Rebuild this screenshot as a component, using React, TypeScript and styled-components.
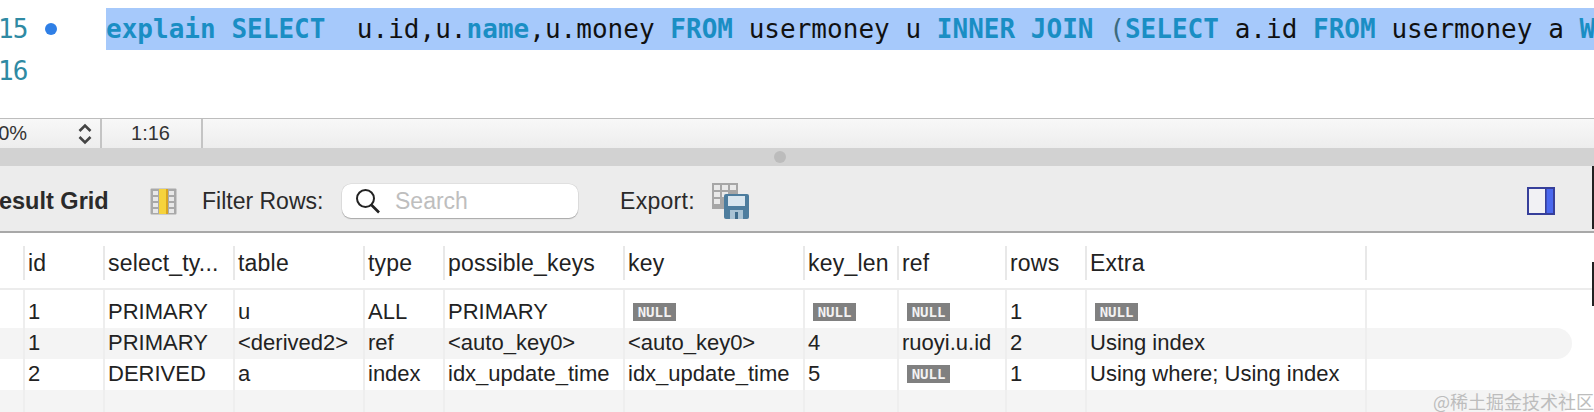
import React from "react";
import styled, { createGlobalStyle } from "styled-components";

const GlobalStyle = createGlobalStyle`
  html, body {
    margin: 0;
    padding: 0;
    background: #fff;
  }
`;

const columns = [23, 80, 130, 130, 80, 180, 180, 94, 108, 80, 280, 207];
const headers = ["", "id", "select_ty...", "table", "type", "possible_keys", "key", "key_len", "ref", "rows", "Extra", ""];
const rows: (string | null)[][] = [
  ["", "1", "PRIMARY", "u", "ALL", "PRIMARY", null, null, null, "1", null, ""],
  ["", "1", "PRIMARY", "<derived2>", "ref", "<auto_key0>", "<auto_key0>", "4", "ruoyi.u.id", "2", "Using index", ""],
  ["", "2", "DERIVED", "a", "index", "idx_update_time", "idx_update_time", "5", null, "1", "Using where; Using index", ""],
  ["", "", "", "", "", "", "", "", "", "", "", ""],
];
const rowHeights = [38, 31, 31, 22];
const rowShifts = [6, -2, -2, 0];

const Kw = ({ children }: { children: React.ReactNode }) => <Keyword>{children}</Keyword>;

const App = () => {
  return (
    <Page>
      <GlobalStyle />
      <Editor>
        <CodeLine>
          <LineNumber>15</LineNumber>
          <Gutter>
            <Dot />
          </Gutter>
          <Selected>
            <Kw>explain</Kw> <Kw>SELECT</Kw>{"  "}u.id,u.<Name>name</Name>,u.money <Kw>FROM</Kw> usermoney u{" "}
            <Kw>INNER</Kw> <Kw>JOIN</Kw> <Paren>(</Paren>
            <Kw>SELECT</Kw> a.id <Kw>FROM</Kw> usermoney a <Kw>WHERE</Kw>
          </Selected>
        </CodeLine>
        <CodeLine>
          <LineNumber>16</LineNumber>
        </CodeLine>
      </Editor>

      <StatusBar>
        <ZoomCell>
          <span>100%</span>
          <svg width="16" height="24" viewBox="0 0 16 24" fill="none" stroke="#444" strokeWidth="2.6">
            <path d="M2.5 9 L8 3.5 L13.5 9" />
            <path d="M2.5 15 L8 20.5 L13.5 15" />
          </svg>
        </ZoomCell>
        <PositionCell>1:16</PositionCell>
      </StatusBar>

      <Splitter>
        <Handle />
      </Splitter>

      <Toolbar>
        <GridTitle>Result Grid</GridTitle>
        <FormEditorIcon />
        <ToolLabel>Filter Rows:</ToolLabel>
        <SearchBox>
          <svg width="26" height="26" viewBox="0 0 26 26" fill="none" stroke="#222" strokeWidth="2">
            <circle cx="10.5" cy="10.5" r="8.5" />
            <path d="M16.5 17 L24 24.5" strokeWidth="2.6" />
          </svg>
          <SearchHint>Search</SearchHint>
        </SearchBox>
        <ExportLabel>Export:</ExportLabel>
        <ExportIcon />
        <PanelToggle />
      </Toolbar>

      <Table>
        <HeaderRow>
          {headers.map((h, i) => (
            <HeaderCell key={i} style={{ width: columns[i] }} $first={i === 0}>
              {h}
            </HeaderCell>
          ))}
        </HeaderRow>
        {rows.map((row, r) => (
          <DataRow key={r} $striped={r % 2 === 1} $height={rowHeights[r]}>
            {row.map((value, i) => (
              <DataCell key={i} style={{ width: columns[i] }} $first={i === 0} $shift={rowShifts[r]}>
                {value === null ? <NullBadge>NULL</NullBadge> : value}
              </DataCell>
            ))}
          </DataRow>
        ))}
      </Table>

      <EdgeTop />
      <EdgeBottom />
      <Watermark>@稀土掘金技术社区</Watermark>
    </Page>
  );
};

const FormEditorIcon = () => (
  <IconSlot $left={40}>
    <svg width="27" height="27" viewBox="0 0 27 27">
      <rect x="0.5" y="0.5" width="26" height="26" rx="1" fill="#a9a9a9" />
      <rect x="3" y="3" width="5" height="4" fill="#e8e8e8" />
      <rect x="3" y="9" width="5" height="4" fill="#e8e8e8" />
      <rect x="3" y="15" width="5" height="4" fill="#e8e8e8" />
      <rect x="3" y="21" width="5" height="4" fill="#e8e8e8" />
      <rect x="19" y="3" width="5" height="4" fill="#e8e8e8" />
      <rect x="19" y="9" width="5" height="4" fill="#e8e8e8" />
      <rect x="19" y="15" width="5" height="4" fill="#e8e8e8" />
      <rect x="19" y="21" width="5" height="4" fill="#e8e8e8" />
      <rect x="9" y="1" width="9" height="25" fill="#f6d33c" />
      <rect x="16" y="1" width="2" height="25" fill="#d9a520" />
    </svg>
  </IconSlot>
);

const ExportIcon = () => (
  <IconSlot $left={17}>
    <svg width="37" height="36" viewBox="0 0 37 36">
      <rect x="0" y="0" width="26" height="26" fill="#a6a6a6" />
      <g fill="#e9e9e9">
        <rect x="2" y="2" width="6" height="5" />
        <rect x="10" y="2" width="6" height="5" />
        <rect x="18" y="2" width="6" height="5" />
        <rect x="2" y="9" width="6" height="5" />
        <rect x="10" y="9" width="6" height="5" />
        <rect x="2" y="16" width="6" height="5" />
      </g>
      <rect x="12" y="11" width="25" height="25" rx="2" fill="#4d7d9e" />
      <rect x="16" y="13" width="17" height="10" fill="#d9e6ef" />
      <rect x="18" y="27" width="13" height="9" fill="#a9c3d4" />
      <rect x="23" y="29" width="3" height="7" fill="#3f6c8b" />
    </svg>
  </IconSlot>
);

const PanelToggle = () => (
  <PanelSlot>
    <svg width="28" height="28" viewBox="0 0 28 28">
      <rect x="1" y="1" width="26" height="26" fill="#f1f1f4" stroke="#363f9a" strokeWidth="2" />
      <rect x="18" y="2" width="8" height="24" fill="#4a68ee" />
      <rect x="18" y="1" width="1.6" height="26" fill="#363f9a" />
    </svg>
  </PanelSlot>
);

const Page = styled.div`
  position: relative;
  width: 1594px;
  height: 412px;
  overflow: hidden;
  background: #fff;
  font-family: "Liberation Sans", Arial, sans-serif;
  color: #222;
`;

const Editor = styled.div`
  height: 118px;
  box-sizing: border-box;
  padding-top: 8px;
  background: #fff;
`;

const CodeLine = styled.div`
  display: flex;
  align-items: center;
  height: 42px;
  font-family: "DejaVu Sans Mono", monospace;
  font-size: 26px;
  letter-spacing: 0.02px;
  white-space: pre;
`;

const LineNumber = styled.div`
  flex: none;
  width: 29px;
  margin-left: -2px;
  color: #2f8aa3;
  letter-spacing: -1px;
`;

const Gutter = styled.div`
  flex: none;
  width: 79px;
  display: flex;
  align-items: center;
  padding-left: 18px;
  box-sizing: border-box;
`;

const Dot = styled.div`
  width: 12px;
  height: 12px;
  border-radius: 50%;
  background: #2f7fe6;
`;

const Selected = styled.div`
  flex: 1;
  height: 42px;
  line-height: 43px;
  background: #a6c9fb;
  color: #111;
  overflow: hidden;
`;

const Keyword = styled.span`
  color: #1a8ec4;
  font-weight: 700;
`;

const Name = styled.span`
  color: #1a8ec4;
  font-weight: 700;
`;

const Paren = styled.span`
  color: #3c6b7e;
`;

const StatusBar = styled.div`
  display: flex;
  height: 30px;
  box-sizing: border-box;
  border-top: 1px solid #bdbdbd;
  background: linear-gradient(#f8f8f8, #ededed);
  font-size: 20px;
  color: #333;
`;

const ZoomCell = styled.div`
  flex: none;
  display: flex;
  align-items: center;
  justify-content: space-between;
  box-sizing: border-box;
  margin-left: -24px;
  width: 126px;
  padding-right: 7px;
  border-right: 2px solid #c4c4c4;
`;

const PositionCell = styled.div`
  width: 101px;
  flex: none;
  display: flex;
  align-items: center;
  justify-content: center;
  box-sizing: border-box;
  padding-right: 2px;
  border-right: 2px solid #c4c4c4;
`;

const Splitter = styled.div`
  height: 18px;
  display: flex;
  align-items: center;
  justify-content: center;
  padding-right: 34px;
  background: #d2d2d2;
`;

const Handle = styled.div`
  width: 12px;
  height: 12px;
  border-radius: 50%;
  background: #bcbcbc;
`;

const Toolbar = styled.div`
  display: flex;
  align-items: center;
  height: 67px;
  box-sizing: border-box;
  padding-top: 5px;
  border-bottom: 2px solid #a8a8a8;
  background: #ececec;
  font-size: 23px;
  color: #2a2a2a;
`;

const GridTitle = styled.div`
  flex: none;
  width: 128px;
  margin-left: -18px;
  font-weight: 700;
  font-size: 23.5px;
  white-space: nowrap;
`;

const IconSlot = styled.div<{ $left: number }>`
  flex: none;
  display: flex;
  margin-left: ${(p) => p.$left}px;
`;

const ToolLabel = styled.div`
  flex: none;
  margin-left: 25px;
  width: 120px;
  white-space: nowrap;
`;

const SearchBox = styled.div`
  flex: none;
  display: flex;
  align-items: center;
  gap: 14px;
  width: 236px;
  height: 34px;
  margin-left: 20px;
  padding-left: 13px;
  box-sizing: border-box;
  background: #fff;
  border-radius: 9px;
  box-shadow: 0 1px 1px #a9a9a9, 0 0 0 0.5px #d4d4d4;
`;

const SearchHint = styled.span`
  color: #bebebe;
  font-size: 23px;
`;

const ExportLabel = styled.div`
  flex: none;
  width: 75px;
  margin-left: 42px;
  letter-spacing: 0.3px;
  white-space: nowrap;
`;

const PanelSlot = styled.div`
  flex: none;
  display: flex;
  margin-left: auto;
  margin-right: 39px;
`;

const Table = styled.div`
  background: #fff;
  font-size: 22px;
  color: #222;
`;

const HeaderRow = styled.div`
  display: flex;
  align-items: center;
  height: 55px;
  border-bottom: 2px solid #ececec;
`;

const HeaderCell = styled.div<{ $first: boolean }>`
  flex: none;
  height: 34px;
  margin-top: 5px;
  line-height: 34px;
  padding-left: 3px;
  box-sizing: border-box;
  font-size: 23px;
  letter-spacing: 0.2px;
  white-space: nowrap;
  border-left: ${(p) => (p.$first ? "none" : "2px solid #e8e8e8")};
`;

const DataRow = styled.div<{ $striped: boolean; $height: number }>`
  display: flex;
  width: 1572px;
  height: ${(p) => p.$height}px;
  background: ${(p) => (p.$striped ? "#f4f4f4" : "#fff")};
  border-radius: 0 16px 16px 0;
`;

const DataCell = styled.div<{ $first: boolean; $shift: number }>`
  flex: none;
  display: flex;
  align-items: center;
  padding-left: 3px;
  padding-top: ${(p) => Math.max(p.$shift, 0)}px;
  padding-bottom: ${(p) => Math.max(-p.$shift, 0)}px;
  box-sizing: border-box;
  white-space: nowrap;
  border-left: ${(p) => (p.$first ? "none" : "2px solid #eeeeee")};
`;

const NullBadge = styled.span`
  width: 43px;
  height: 18px;
  margin-left: 5px;
  background: #808080;
  color: #f2f2f2;
  font-family: "DejaVu Sans Mono", monospace;
  font-weight: 700;
  font-size: 14px;
  line-height: 18px;
  text-align: center;
`;

const EdgeTop = styled.div`
  position: absolute;
  right: 0;
  top: 166px;
  width: 2px;
  height: 63px;
  background: #222;
`;

const EdgeBottom = styled.div`
  position: absolute;
  right: 0;
  top: 262px;
  width: 2px;
  height: 44px;
  background: #222;
`;

const Watermark = styled.div`
  position: absolute;
  right: 0;
  top: 389px;
  font-family: "Noto Sans CJK SC", "Liberation Sans", sans-serif;
  font-size: 18px;
  line-height: 24px;
  color: #bdbdbd;
  white-space: nowrap;
`;

export default App;
